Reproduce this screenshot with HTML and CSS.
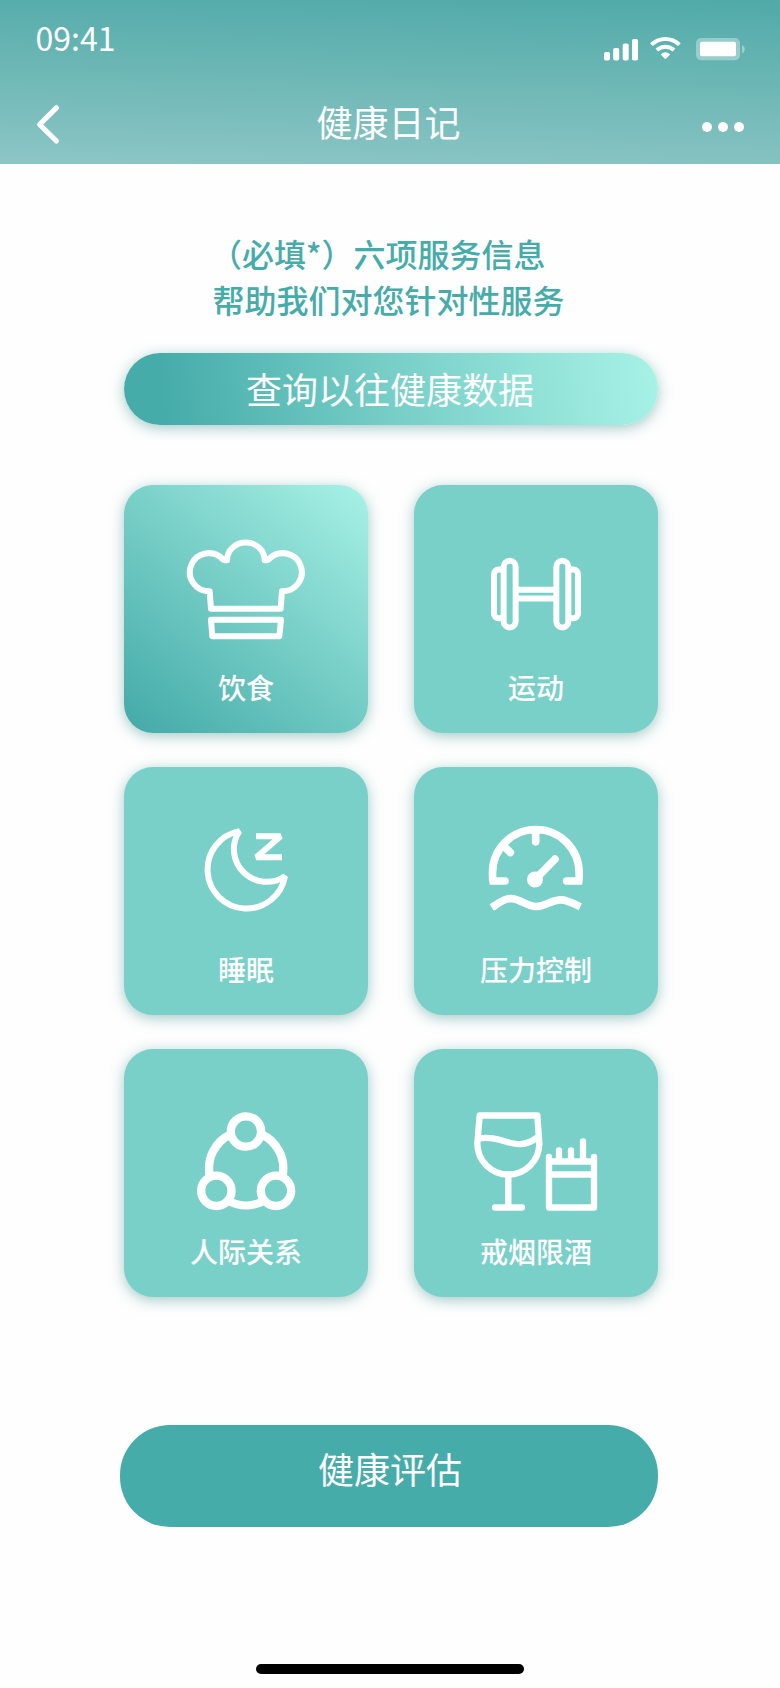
FILE: index.html
```html
<!DOCTYPE html>
<html lang="zh-CN">
<head>
<meta charset="utf-8">
<title>健康日记</title>
<link rel="stylesheet" href="styles.css">
</head>
<body>
<div class="screen">
  <header class="header">
    <div class="status">
      <span class="time">09:41</span>
      <svg class="status-icons" width="144" height="26" viewBox="602 36 144 26">
        <g fill="#fff">
          <rect x="604" y="52" width="6" height="8.6" rx="1.8"/>
          <rect x="613.2" y="48" width="6" height="12.6" rx="1.8"/>
          <rect x="622.7" y="43.5" width="6" height="17.1" rx="1.8"/>
          <rect x="632" y="39" width="6" height="21.6" rx="1.8"/>
          <path d="M665.4 59.2 L660.6 54.4 Q665.4 50 670.2 54.4 Z"/>
        </g>
        <g fill="none" stroke="#fff" stroke-width="4">
          <path d="M651.4 44.6 C659.5 37 671.3 37 679.4 44.6"/>
          <path d="M656.8 50 C661.8 45.6 669 45.6 674 50"/>
        </g>
        <rect x="696" y="38" width="44" height="22.3" rx="5" fill="#fff" opacity=".35"/>
        <rect x="700" y="41.7" width="36" height="14.6" rx="2" fill="#fff"/>
        <path d="M742 45 Q744.8 46.5 744.8 49.2 T742 53.4 Z" fill="#fff" opacity=".4"/>
      </svg>
    </div>
    <div class="nav">
      <svg class="back" width="26" height="42" viewBox="35 104 26 42"><path d="M56.4 107.8 L39.6 124.5 L56.4 141" fill="none" stroke="#fff" stroke-width="5.2" stroke-linecap="round" stroke-linejoin="round"/></svg>
      <h1 class="title">健康日记</h1>
      <div class="more"><i></i><i></i><i></i></div>
    </div>
  </header>

  <main class="main">
    <div class="intro">
      <p class="intro-first">（必填*）六项服务信息</p>
      <p class="intro-second">帮助我们对您针对性服务</p>
    </div>
    <button class="query">查询以往健康数据</button>

    <section class="grid">
      <div class="card active">
        <svg class="icon" viewBox="42 43.5 732 540" stroke-width="18">
          <path d="M303 415 L299 362 A57 57 0 1 1 338 266 L343 269 L351 269 A56.5 53 0 0 1 464 269 L472 269 L477 266 A57 57 0 1 1 516 362 L512 415 Z"/>
          <path d="M303 448 H513 L508 497 H307 Z"/>
        </svg>
        <span class="label">饮食</span>
      </div>
      <div class="card">
        <svg class="icon" viewBox="42 43.5 732 540" stroke-width="18">
          <rect x="311" y="271" width="36" height="200" rx="18"/>
          <rect x="469" y="271" width="36" height="200" rx="18"/>
          <path d="M303 297 H296 A14 14 0 0 0 282 311 V429 A14 14 0 0 0 296 443 H303"/>
          <path d="M513 297 H520 A14 14 0 0 1 534 311 V429 A14 14 0 0 1 520 443 H513"/>
          <path d="M350 358 H466 M350 384 H466"/>
        </svg>
        <span class="label">运动</span>
      </div>
      <div class="card">
        <svg class="icon bevel" viewBox="42 34.5 732 540" stroke-width="18">
          <path d="M388 227 A117 117 0 1 0 525 362 A98 98 0 0 1 388 227 Z"/>
          <path d="M438 242 H512 L439 305 H516"/>
        </svg>
        <span class="label">睡眠</span>
      </div>
      <div class="card">
        <svg class="icon" viewBox="42 34.5 732 540" stroke-width="23">
          <path class="miter" d="M315 376.5 H279 A131 131 0 0 1 277.5 352 A130 130 0 0 1 537.5 352 A131 131 0 0 1 536.5 376.5 H500"/>
          <path d="M407 230 V259 M315 275 L331 291 M405 372 L465 311"/>
          <circle cx="405" cy="372" r="12.5"/>
          <path class="butt" d="M275 456 C295 444 312 429 332 429 C362 430 380 453 408 453 C436 453 454 433 483 433 C502 433 522 445 541 454"/>
        </svg>
        <span class="label">压力控制</span>
      </div>
      <div class="card">
        <svg class="icon bevel" viewBox="42 40.5 732 540" stroke-width="25">
          <circle cx="408" cy="288" r="45.5"/>
          <circle cx="319" cy="466" r="45.5"/>
          <circle cx="498" cy="466" r="45.5"/>
          <path d="M300 423 A111.5 111.5 0 0 1 364 296 M453 296 A111.5 111.5 0 0 1 517 423 M357 497 A111.5 111.5 0 0 0 460 497"/>
        </svg>
        <span class="label">人际关系</span>
      </div>
      <div class="card">
        <svg class="icon" viewBox="42 40.5 732 540" stroke-width="19">
          <path d="M239 240 H412 L418 324 A93 93 0 0 1 232 324 Z"/>
          <path d="M236 309 C290 300 320 326 358 326 C382 326 400 316 415 303"/>
          <path d="M325 417 V516 M285 516 H366"/>
          <path d="M447 364 V516 H582 V364 M447 378 H582 M447 417 H582 M477 345 V378 M513 345 V378 M549 318 V378"/>
        </svg>
        <span class="label">戒烟限酒</span>
      </div>
    </section>

    <button class="assess">健康评估</button>
  </main>
  <div class="home-bar"></div>
</div>
</body>
</html>
```
FILE: styles.css
```css
* { box-sizing: border-box; margin: 0; padding: 0; }
body {
  width: 780px;
  background: #fefefe;
  font-family: "Noto Sans CJK SC", sans-serif;
  color: #fff;
}
.screen {
  height: 1688px;
  display: flex;
  flex-direction: column;
  overflow: hidden;
}
.header {
  height: 164px;
  flex: none;
  background: linear-gradient(181.5deg, #50aaa8 0%, #8cc6c5 100%);
}
.status {
  height: 80px;
  padding: 13px 34px 0 35.5px;
  display: flex;
  justify-content: space-between;
}
.time { font-size: 32px; line-height: 48px; }
.status-icons { margin-top: 23px; }
.nav {
  height: 84px;
  padding: 0 36px 0 35px;
  display: grid;
  grid-template-columns: 100px 1fr 100px;
}
.back { margin-top: 24px; }
.title {
  font-size: 36px;
  font-weight: 400;
  line-height: 52px;
  padding: 15px 2px 0 0;
  text-align: center;
}
.more {
  display: flex;
  justify-content: flex-end;
  gap: 6px;
  padding-top: 42px;
}
.more i {
  width: 10px;
  height: 10px;
  border-radius: 50%;
  background: #fff;
}
.main {
  flex: 1;
  padding: 66px 122px 0 124px;
  display: flex;
  flex-direction: column;
}
.intro {
  font-size: 32px;
  font-weight: 500;
  line-height: 46px;
  color: #46acaa;
  white-space: nowrap;
}
.intro-first { padding-left: 86px; }
.intro-second { padding-left: 88.5px; }
button {
  border: 0;
  font-family: inherit;
  font-size: 36px;
  color: #fff;
}
.query {
  height: 72px;
  margin-top: 31px;
  padding: 0 2px 2px 0;
  line-height: 70px;
  border-radius: 36px;
  background: linear-gradient(82deg, #46acaa 8%, #79d0c8 52%, #a8f2e7 100%);
  box-shadow: 0 3px 14px rgba(70, 150, 145, .5);
}
.grid {
  margin-top: 59.5px;
  display: grid;
  grid-template-columns: 244px 244px;
  column-gap: 46px;
  row-gap: 34px;
}
.card {
  height: 248px;
  border-radius: 29px;
  background: #79d0c8;
  box-shadow: 0 3px 14px rgba(70, 150, 145, .5);
  display: flex;
  flex-direction: column;
  align-items: center;
}
.card.active { background: linear-gradient(40deg, #46acaa 4%, #79d0c8 54%, #a8f2e7 100%); }
.icon {
  width: 244px;
  height: 180px;
  fill: none;
  stroke: #fff;
  stroke-linecap: round;
  stroke-linejoin: round;
}
.bevel, .butt { stroke-linecap: butt; stroke-linejoin: bevel; }
.miter { stroke-linejoin: miter; }
.label {
  font-size: 28px;
  font-weight: 500;
  line-height: 42px;
  margin-top: 1px;
}
.assess {
  height: 102px;
  width: 538px;
  margin: 128.5px 0 0 -4px;
  padding: 0 0 17px 2px;
  border-radius: 50px;
  background: #46acaa;
}
.home-bar {
  width: 268px;
  height: 10px;
  flex: none;
  align-self: center;
  margin-bottom: 14px;
  border-radius: 5px;
  background: #000;
}
```
